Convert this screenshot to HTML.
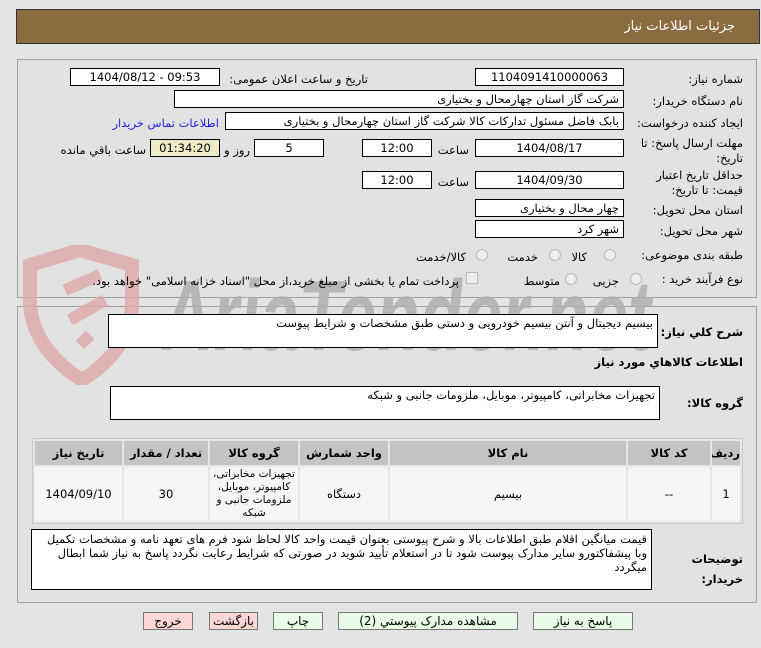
<!DOCTYPE html>
<html><head><meta charset="utf-8"><style>
*{margin:0;padding:0;box-sizing:border-box}
body{width:761px;height:648px;background:#e4e4e4;position:relative;overflow:hidden;font-family:"DejaVu Sans","Liberation Sans",sans-serif;font-size:11.5px;color:#000}
.a{position:absolute}
.box{position:absolute;background:#fff;border:1px solid #000;height:18px;line-height:16px;text-align:center;white-space:nowrap;overflow:hidden}
.r{direction:rtl;text-align:right;padding-right:4px}
.lbl{position:absolute;direction:rtl;text-align:right;white-space:nowrap}
.panel{position:absolute;left:17px;right:4px;border:1px solid #a0a0a0;background:#e2e2e2}
.rad{position:absolute;width:12px;height:12px;border-radius:50%;border:1px solid #bbb;background:#eee}
table{border-collapse:separate;border-spacing:2px;position:absolute;left:32px;top:438px;width:711px;background:#e6e6e6;border:1px solid #c8c8c8;table-layout:fixed}
td,th{text-align:center;font-size:11.5px;overflow:hidden}
th{background:#c4c4c4;height:24px;font-weight:bold}
td{background:#f6f6f6;height:54px;line-height:13px}
.btn{position:absolute;top:612px;height:18px;border:1px solid #777;text-align:center;line-height:16px;font-size:12px}
</style></head><body>
<div class="a" style="left:16px;top:9px;width:744px;height:35px;background:#8b6b40;border:1px solid #333"></div>
<div class="lbl" style="right:26px;top:19px;color:#fff;font-size:13px">جزئیات اطلاعات نیاز</div>

<div class="panel" style="top:59px;height:239px"></div>
<div class="panel" style="top:306px;height:297px"></div>

<svg class="a" style="left:20px;top:245px" width="660" height="140">
<path d="M10 20 L60 5 L112 20 L112 60 Q110 105 62 135 Q14 105 10 60 Z" fill="none" stroke="#e0a8a8" stroke-width="14" opacity=".8"/>
<path d="M45 45 L80 30 M50 75 L85 55 M60 100 L70 90" stroke="#e0a8a8" stroke-width="12" opacity=".8"/>
<text x="150" y="105" font-family="Liberation Sans,sans-serif" font-weight="bold" font-size="100" fill="#b0b0b0" opacity=".85" transform="skewX(-6)" textLength="490" lengthAdjust="spacingAndGlyphs">AriaTender.net</text>
</svg>

<div class="lbl" style="right:18px;top:72px">شماره نیاز:</div>
<div class="box" style="left:475px;top:68px;width:149px">1104091410000063</div>
<div class="lbl" style="right:393px;top:72px">تاریخ و ساعت اعلان عمومی:</div>
<div class="box" style="left:70px;top:68px;width:150px">1404/08/12 - 09:53</div>

<div class="lbl" style="right:18px;top:94px">نام دستگاه خریدار:</div>
<div class="box r" style="left:174px;top:90px;width:450px">شرکت گاز استان چهارمحال و بختیاری</div>

<div class="lbl" style="right:18px;top:116px">ایجاد کننده درخواست:</div>
<div class="box r" style="left:225px;top:112px;width:399px">بابک فاضل  مسئول تدارکات کالا شرکت گاز استان چهارمحال و بختیاری</div>
<div class="lbl" style="right:542px;top:116px;color:#2222dd">اطلاعات تماس خریدار</div>

<div class="lbl" style="right:18px;top:136px;line-height:15px">مهلت ارسال پاسخ: تا<br>تاریخ:</div>
<div class="box" style="left:475px;top:139px;width:149px">1404/08/17</div>
<div class="lbl" style="right:292px;top:143px">ساعت</div>
<div class="box" style="left:362px;top:139px;width:70px">12:00</div>
<div class="box" style="left:254px;top:139px;width:70px">5</div>
<div class="lbl" style="right:511px;top:143px">روز و</div>
<div class="box" style="left:150px;top:139px;width:70px;background:#eeebc4">01:34:20</div>
<div class="lbl" style="right:615px;top:143px">ساعت باقي مانده</div>

<div class="lbl" style="right:18px;top:168px;line-height:15px">حداقل تاریخ اعتبار<br>قیمت: تا تاریخ:</div>
<div class="box" style="left:475px;top:171px;width:149px">1404/09/30</div>
<div class="lbl" style="right:292px;top:175px">ساعت</div>
<div class="box" style="left:362px;top:171px;width:70px">12:00</div>

<div class="lbl" style="right:18px;top:203px">استان محل تحویل:</div>
<div class="box r" style="left:475px;top:199px;width:149px">چهار محال و بختیاری</div>
<div class="lbl" style="right:18px;top:224px">شهر محل تحویل:</div>
<div class="box r" style="left:475px;top:220px;width:149px">شهر کرد</div>

<div class="lbl" style="right:18px;top:248px">طبقه بندی موضوعی:</div>
<div class="rad" style="left:604px;top:249px"></div><div class="lbl" style="right:174px;top:250px">کالا</div>
<div class="rad" style="left:549px;top:249px"></div><div class="lbl" style="right:223px;top:250px">خدمت</div>
<div class="rad" style="left:476px;top:249px"></div><div class="lbl" style="right:295px;top:250px">کالا/خدمت</div>

<div class="lbl" style="right:18px;top:272px">نوع فرآیند خرید :</div>
<div class="rad" style="left:630px;top:273px"></div><div class="lbl" style="right:142px;top:274px">جزیی</div>
<div class="rad" style="left:565px;top:273px"></div><div class="lbl" style="right:201px;top:274px">متوسط</div>
<div class="a" style="left:466px;top:272px;width:12px;height:12px;border:1px solid #bbb;background:#eee"></div>
<div class="lbl" style="right:302px;top:274px">پرداخت تمام یا بخشی از مبلغ خرید،از محل "اسناد خزانه اسلامی" خواهد بود.</div>

<div class="lbl" style="right:18px;top:325px;font-weight:bold">شرح کلي نیاز:</div>
<div class="box r" style="left:108px;top:314px;width:550px;height:34px;text-align:right">بیسیم دیجیتال و آنتن بیسیم خودرویی و دستی طبق مشخصات و شرایط پیوست</div>
<div class="lbl" style="right:18px;top:355px;font-weight:bold">اطلاعات کالاهاي مورد نیاز</div>
<div class="lbl" style="right:18px;top:396px;font-weight:bold">گروه کالا:</div>
<div class="box r" style="left:110px;top:386px;width:550px;height:34px;text-align:right">تجهیزات مخابراتی، کامپیوتر، موبایل، ملزومات جانبی و شبکه</div>

<table dir="rtl"><tr><th style="width:28px">ردیف</th><th style="width:82px">کد کالا</th><th style="width:236px">نام کالا</th><th style="width:88px">واحد شمارش</th><th style="width:88px">گروه کالا</th><th style="width:84px">تعداد / مقدار</th><th>تاریخ نیاز</th></tr>
<tr><td>1</td><td>--</td><td>بیسیم</td><td>دستگاه</td><td style="font-size:10.5px;line-height:13px">تجهیزات مخابراتی، کامپیوتر، موبایل، ملزومات جانبی و شبکه</td><td>30</td><td>1404/09/10</td></tr></table>

<div class="lbl" style="right:18px;top:549px;font-weight:bold;line-height:20px">توضیحات<br>خریدار:</div>
<div class="box r" style="left:31px;top:529px;width:621px;height:61px;white-space:normal;line-height:14px;text-align:right;padding-top:2px">قیمت میانگین اقلام طبق اطلاعات بالا و شرح پیوستی بعنوان قیمت واحد  کالا  لحاظ شود فرم های تعهد نامه و مشخصات تکمیل وبا پیشفاکتورو سایر مدارک پیوست شود تا در استعلام تأیید شوید در صورتی که شرایط رعایت نگردد پاسخ به نیاز شما ابطال میگردد</div>

<div class="btn" style="left:143px;width:50px;background:#fcd6d6">خروج</div>
<div class="btn" style="left:209px;width:49px;background:#fcd6d6">بازگشت</div>
<div class="btn" style="left:273px;width:50px;background:#e8fce8">چاپ</div>
<div class="btn" style="left:338px;width:180px;background:#e8fce8">مشاهده مدارک پیوستي (2)</div>
<div class="btn" style="left:533px;width:100px;background:#e8fce8">پاسخ به نیاز</div>
</body></html>
